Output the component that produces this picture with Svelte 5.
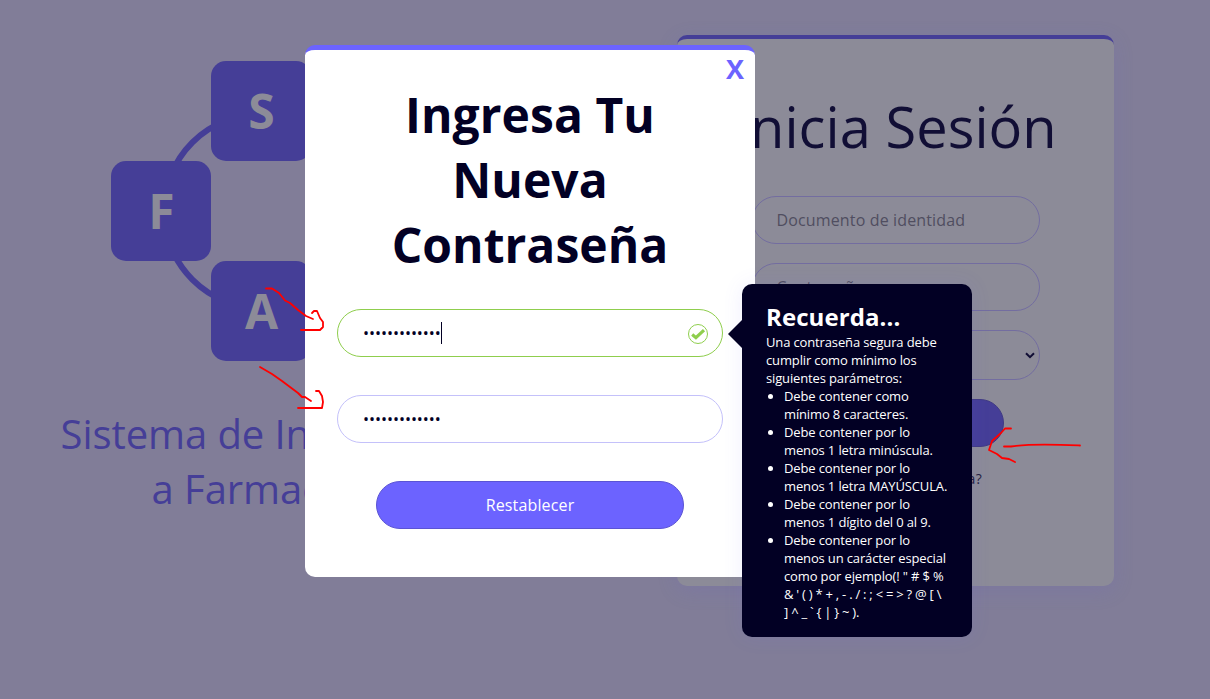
<script>
  const dots = '•'.repeat(13);
  const rules = [
    ['Debe contener como', 'mínimo 8 caracteres.'],
    ['Debe contener por lo', 'menos 1 letra minúscula.'],
    ['Debe contener por lo', 'menos 1 letra MAYÚSCULA.'],
    ['Debe contener por lo', 'menos 1 dígito del 0 al 9.'],
    ['Debe contener por lo', 'menos un carácter especial', 'como por ejemplo(! " # $ %', "& ' ( ) * + , - . / : ; < = > ? @ [ \\", '] ^ _ ` { | } ~ ).']
  ];
</script>

<div class="page">
  <section class="brand">
    <div class="logo">
      <div class="ring"></div>
      <div class="tile s">S</div>
      <div class="tile f">F</div>
      <div class="tile a">A</div>
    </div>
    <p class="tagline">Sistema de Inventario<br />a Farmacias</p>
  </section>

  <section class="login">
    <h2>Inicia Sesión</h2>
    <div class="field">Documento de identidad</div>
    <div class="field">Contraseña</div>
    <div class="field select">
      <svg width="10" height="7" viewBox="0 0 10 7"><path d="M1 1.2 5 5.2 9 1.2" fill="none" stroke="#110e35" stroke-width="2" /></svg>
    </div>
    <div class="enter"></div>
    <div class="forgot">¿Olvidaste tu contraseña?</div>
  </section>

  <section class="modal">
    <span class="close">X</span>
    <h1>Ingresa Tu<br />Nueva<br />Contraseña</h1>
    <div class="pass valid">
      <span class="dots">{dots}</span><i class="caret"></i>
      <svg class="check" width="20" height="20" viewBox="0 0 20 20">
        <circle cx="10" cy="10" r="9.5" fill="none" stroke="#8fce4d" stroke-width="1" />
        <path d="M4.2 10.6 7.9 13.7 16 6.2" fill="none" stroke="#8fce4d" stroke-width="3.2" />
      </svg>
    </div>
    <div class="pass"><span class="dots">{dots}</span></div>
    <button>Restablecer</button>
  </section>

  <aside class="tip">
    <h3>Recuerda...</h3>
    <p>Una contraseña segura debe<br />cumplir como mínimo los<br />siguientes parámetros:</p>
    <ul>
      {#each rules as lines}
        <li>{#each lines as line, i}<span class:symbols={i > 2}>{line}</span>{/each}</li>
      {/each}
    </ul>
  </aside>

  <svg class="marks" width="1210" height="699" viewBox="0 0 1210 699">
    <path d="M266 288.500H272L279 293L285 300.500L290 303L298 310L306 316L313 319M312 313L314 311H317L320 318L323 322V327L320 330H301" />
    <path d="M260 367L272 374L282 381L290 387L298 393L302 397L305 397L311 401M316 391L319 391L322 396L323 402L322 408H298" />
    <path d="M1011 428.500H1005L1001 433L992 441L989 450L997 454L1002 458L1009 459L1015 462M1004 446.500H1011C1030 443.500 1054 444.500 1080 445.500" />
  </svg>
</div>

<style>
  :global(body) { margin: 0; }
  * { box-sizing: border-box; }
  .page {
    position: relative;
    width: 1210px;
    height: 699px;
    overflow: hidden;
    display: grid;
    grid-template-columns: 522px 1fr;
    background: #817d98;
    font-family: 'Open Sans', sans-serif;
    color: #020024;
  }
  h1, h2, h3, p, ul { margin: 0; padding: 0; }
  .brand { padding-top: 61px; display: flex; flex-direction: column; align-items: center; }
  .logo { position: relative; width: 300px; height: 300px; flex: none; }
  .ring { position: absolute; inset: 50px; border: 6px solid #453e97; border-radius: 50%; }
  .tile {
    position: absolute;
    width: 100px;
    height: 100px;
    padding: 0 0 1px 1px;
    border-radius: 15px;
    background: #453e97;
    color: #8c8b98;
    font-size: 48px;
    font-weight: 700;
    display: flex;
    align-items: center;
    justify-content: center;
  }
  .s { left: 100px; top: 0; }
  .f { left: 0; top: 100px; }
  .a { left: 100px; top: 200px; }
  .tagline { margin-top: 45px; padding-left: 2px; font-size: 40px; line-height: 55px; letter-spacing: -.08px; color: #453e97; text-align: center; white-space: nowrap; }

  .login {
    margin: 35px 0 0 155px;
    width: 437px;
    height: 551px;
    border-top: 4px solid #453e97;
    border-radius: 10px;
    background: #8c8b98;
    box-shadow: 0 5px 20px rgba(108, 99, 200, .18);
    display: flex;
    flex-direction: column;
    align-items: center;
  }
  h2 { margin-top: 49px; font-size: 56px; line-height: 76px; font-weight: 400; color: #110e35; white-space: nowrap; letter-spacing: .05px; }
  .field {
    width: 288px;
    height: 48px;
    margin-top: 19px;
    padding: 0 24px;
    border: 1px solid #736da0;
    border-radius: 25px;
    display: flex;
    align-items: center;
    font-size: 16px;
    letter-spacing: .14px;
    color: #504e60;
  }
  h2 + .field { margin-top: 32px; }
  .select { height: 50px; justify-content: flex-end; padding-right: 4px; }
  .enter { width: 216px; height: 48px; margin-top: 19px; border: 1px solid #403a84; border-radius: 24px; background: #453e97; }
  .forgot { margin-top: 22px; font-size: 14px; line-height: 20px; letter-spacing: .24px; color: #25213f; }

  .modal {
    position: absolute;
    left: 305px;
    top: 45px;
    width: 450px;
    height: 532px;
    border-top: 5px solid #6c63ff;
    border-radius: 10px;
    background: #fff;
    display: flex;
    flex-direction: column;
    align-items: center;
  }
  .close { position: absolute; right: 11px; top: -1px; font-size: 27px; line-height: 39px; font-weight: 700; color: #6c63ff; }
  h1 { margin-top: 32px; font-size: 48px; line-height: 65px; font-weight: 700; text-align: center; letter-spacing: .05px; }
  .pass {
    width: 386px;
    height: 48px;
    margin-top: 38px;
    padding: 0 14px 0 25px;
    border: 1px solid #c4c1fa;
    border-radius: 24px;
    display: flex;
    align-items: center;
    font-size: 16px;
  }
  h1 + .pass { margin-top: 32px; }
  .valid { border-color: #8fce4d; }
  .dots { letter-spacing: -.03px; }
  .caret { width: 1px; height: 22px; background: #020024; }
  .check { margin-left: auto; margin-top: 2px; }
  button {
    width: 308px;
    height: 48px;
    margin-top: 38px;
    border: 1px solid #5b54d4;
    border-radius: 24px;
    background: #6c63ff;
    color: #fff;
    font: 16px 'Open Sans', sans-serif;
    letter-spacing: .15px;
  }
  .tip {
    position: absolute;
    left: 742px;
    top: 284px;
    width: 230px;
    height: 353px;
    padding: 16px 20px 0 24px;
    border-radius: 10px;
    background: #020024;
    box-shadow: 0 0 20px rgba(108, 99, 255, .1);
    color: #fff;
    font-size: 13px;
    line-height: 18px;
    letter-spacing: -.14px;
    white-space: nowrap;
  }
  .tip::before {
    content: '';
    position: absolute;
    left: -14px;
    top: 36px;
    border: 14px solid transparent;
    border-left: 0;
    border-right-color: #020024;
  }
  h3 { font-size: 24px; line-height: 33px; font-weight: 700; letter-spacing: .08px; }
  ul { padding-left: 18px; }
  li span { display: block; }
  li span:first-child { display: inline-block; vertical-align: top; }
  .symbols { word-spacing: -.22px; }
  .marks { position: absolute; inset: 0; fill: none; stroke: #f00; stroke-width: 1.8; stroke-linecap: round; stroke-linejoin: round; }
</style>
